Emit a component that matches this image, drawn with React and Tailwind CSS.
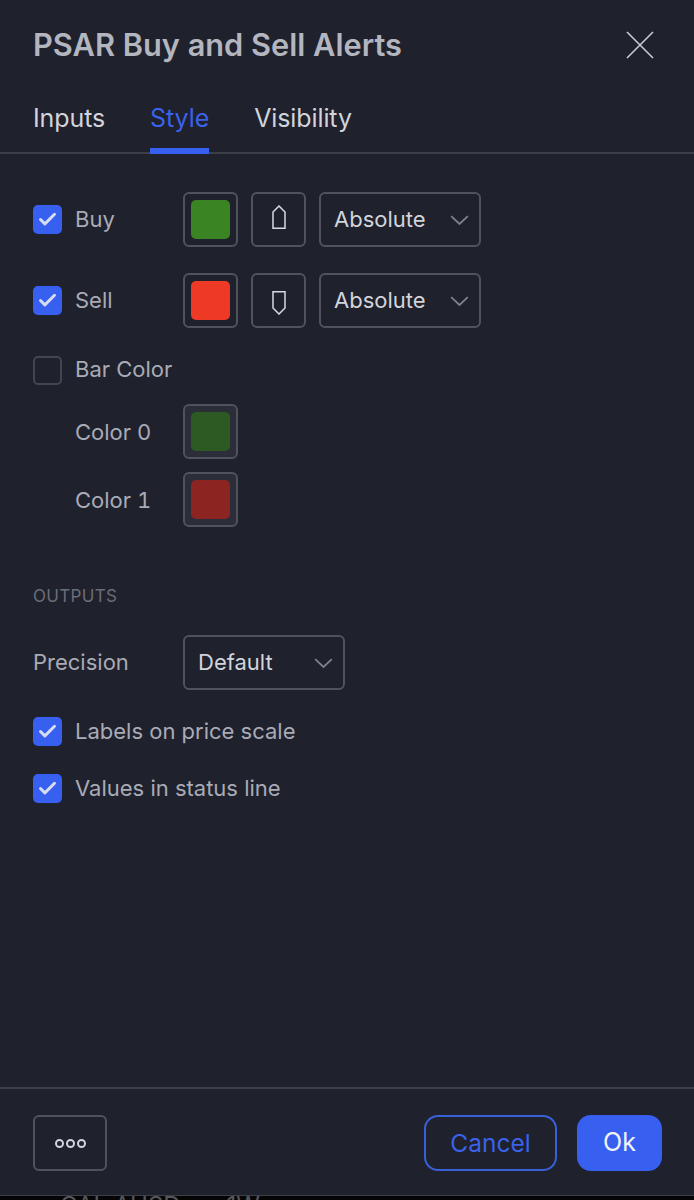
import React from "react";
import { Check } from "lucide-react";

const Checkbox = ({ checked }) => (
  <span className={`w-[29px] h-[29px] rounded-[5px] flex items-center justify-center shrink-0 ${checked ? "bg-[#3860f0]" : "border-2 border-[#43454f]"}`}>
    {checked && <Check size={21} strokeWidth={3.4} className="text-[#d6dcf2]" />}
  </span>
);

const Swatch = ({ color, dim }) => (
  <button className={`w-[55px] h-[55px] rounded-[6px] border-2 border-[#50525c] flex items-center justify-center shrink-0 ${dim ? "bg-[#2b2e39]" : ""}`}>
    <span className={`w-[39px] h-[39px] rounded-[5px] ${color}`}></span>
  </button>
);

const ShapeBtn = ({ down }) => (
  <button className="w-[55px] h-[55px] rounded-[6px] border-2 border-[#50525c] flex items-center justify-center shrink-0">
    <svg width="14" height="24" viewBox="0 0 14 24" fill="none" stroke="#d8dae2" strokeWidth="1.5" className={down ? "rotate-180 mt-[4px]" : "mb-[6px]"}>
      <path d="M1 23.2V7L7 1L13 7V23.2Z" />
    </svg>
  </button>
);

const Select = ({ label, width }) => (
  <button className={`${width} h-[55px] rounded-[6px] border-2 border-[#50525c] pl-[13px] pr-[10px] flex items-center justify-between text-[22px] text-[#d2d4dc] shrink-0`}>
    <span>{label}</span>
    <svg width="19" height="11" viewBox="0 0 19 11" fill="none" stroke="#7f818b" strokeWidth="1.8" className="mt-[2px]">
      <path d="M1.2 1.2L9.5 9L17.8 1.2" />
    </svg>
  </button>
);

const App = () => {
  return (
    <div className="w-[694px] h-[1200px] bg-[#1f212c] flex flex-col overflow-hidden font-['Inter',sans-serif]">
      <header className="flex items-center justify-between pl-[33px] pr-[40px] h-[90px] shrink-0">
        <h1 className="text-[30.75px] font-semibold text-[#b3b5bf]">PSAR Buy and Sell Alerts</h1>
        <svg width="28" height="28" viewBox="0 0 28 28" fill="none" stroke="#c9cbd3" strokeWidth="1.6">
          <path d="M1 1L27 27M27 1L1 27" />
        </svg>
      </header>

      <nav className="flex gap-[45px] px-[33px] h-[64px] border-b-2 border-[#3d3f48] text-[25px] tracking-[-0.1px] shrink-0">
        <span className="text-[#d2d4dc] pt-[10px]">Inputs</span>
        <span className="text-[#3a62ea] pt-[10px] h-[64px] border-b-[6px] border-[#3860f0]">Style</span>
        <span className="text-[#d2d4dc] pt-[10px]">Visibility</span>
      </nav>

      <main className="flex-1 px-[33px] pt-[38px] text-[22px] text-[#a9abb6]">
        <div className="flex items-center gap-[13px] h-[55px]">
          <Checkbox checked />
          <span className="w-[95px]">Buy</span>
          <div className="flex gap-[13px]">
            <Swatch color="bg-[#3a8423]" />
            <ShapeBtn />
            <Select label="Absolute" width="w-[162px]" />
          </div>
        </div>
        <div className="flex items-center gap-[13px] h-[55px] mt-[26px]">
          <Checkbox checked />
          <span className="w-[95px]">Sell</span>
          <div className="flex gap-[13px]">
            <Swatch color="bg-[#ee3a24]" />
            <ShapeBtn down />
            <Select label="Absolute" width="w-[162px]" />
          </div>
        </div>
        <div className="flex items-center gap-[13px] h-[29px] mt-[28px]">
          <Checkbox />
          <span className="pb-[2px]">Bar Color</span>
        </div>
        <div className="flex items-center h-[55px] mt-[19px] pl-[42px]">
          <span className="w-[108px] pt-[2px] tabular-nums">Color 0</span>
          <Swatch color="bg-[#2c5a22]" dim />
        </div>
        <div className="flex items-center h-[55px] mt-[13px] pl-[42px]">
          <span className="w-[108px] pt-[2px] tabular-nums">Color 1</span>
          <Swatch color="bg-[#8c2522]" dim />
        </div>

        <div className="mt-[57px] text-[17px] leading-[24px] text-[#6b6d78] tracking-[0.3px]">OUTPUTS</div>

        <div className="flex items-center h-[55px] mt-[27px]">
          <span className="w-[150px]">Precision</span>
          <Select label="Default" width="w-[162px]" />
        </div>
        <div className="flex items-center gap-[13px] h-[29px] mt-[27px]">
          <Checkbox checked />
          <span>Labels on price scale</span>
        </div>
        <div className="flex items-center gap-[13px] h-[29px] mt-[28px]">
          <Checkbox checked />
          <span>Values in status line</span>
        </div>
      </main>

      <footer className="h-[108px] shrink-0 border-t-2 border-[#3d3f48] px-[33px] pt-[26px] flex justify-between items-start">
        <button className="w-[74px] h-[56px] rounded-[6px] border-2 border-[#50525c] flex items-center justify-center gap-[2px]">
          <span className="w-[9px] h-[9px] rounded-full border-2 border-[#d2d4dc]"></span>
          <span className="w-[9px] h-[9px] rounded-full border-2 border-[#d2d4dc]"></span>
          <span className="w-[9px] h-[9px] rounded-full border-2 border-[#d2d4dc]"></span>
        </button>
        <div className="flex gap-[20px] mr-[-1px]">
          <button className="w-[133px] h-[56px] rounded-[14px] border-2 border-[#3860d8] text-[24.5px] text-[#3a62ea]">Cancel</button>
          <button className="w-[85px] h-[56px] rounded-[14px] bg-[#3860f0] text-[25px] text-[#f2f4fb]">Ok</button>
        </div>
      </footer>
      <div className="h-[5px] bg-[#050506] shrink-0 border-t border-[#3d3f48] overflow-hidden flex pl-[60px] gap-[46px] text-[24px] leading-[30px] text-[#55565c]">
        <span className="-mt-[5px]">CAL AUSD</span>
        <span className="-mt-[5px]">1W</span>
      </div>
    </div>
  );
};

export default App;
